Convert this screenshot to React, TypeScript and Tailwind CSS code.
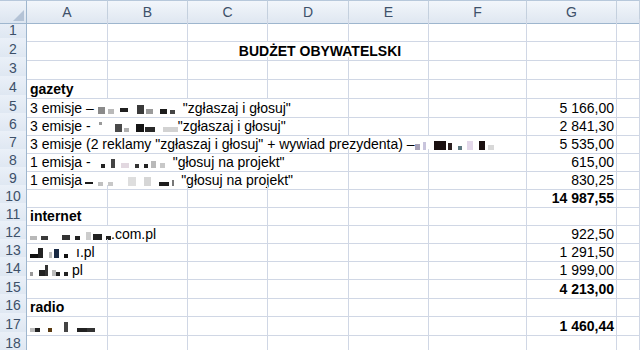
import React from "react";

type Blk = [number, number, string, number?, number?]; // marginLeft, width, color, height, offsetBottom

function Mosaic({ blocks }: { blocks: Blk[] }) {
  return (
    <span className="inline-flex items-end h-[12px] mb-[2px]">
      {blocks.map(([ml, w, c, h = 6, ob = 0], i) => (
        <span
          key={i}
          className="inline-block"
          style={{ marginLeft: ml, width: w, height: h, background: c, marginBottom: ob }}
        />
      ))}
    </span>
  );
}

const GRID = "grid grid-cols-[27px_81px_80px_80px_81px_80px_98px_90px_23px]";
const FONT = { fontFamily: '"Liberation Sans", Arial, sans-serif' };

function RH({ n }: { n: number }) {
  return (
    <div className="flex items-center justify-center bg-gradient-to-b from-[#eaf0f8] to-[#dde6f1] border-r border-b border-r-[#9eb6ce] border-b-[#c6d3e3] text-[14px] text-[#3d5069] pt-[1px]">
      {n}
    </div>
  );
}

function C({ span = "", right = false, bold = false, children, className = "" }: { span?: string; right?: boolean; bold?: boolean; children?: React.ReactNode; className?: string }) {
  return (
    <div
      className={`flex items-end whitespace-nowrap overflow-hidden px-[3px] pb-[1px] border-r border-b border-[#d0d7e5] text-[14px] leading-[16px] text-black ${span} ${right ? "justify-end pr-[2px]" : ""} ${bold ? "font-bold" : ""} ${className}`}
    >
      {children}
    </div>
  );
}

function Row({ n, h, children }: { n: number; h: string; children?: React.ReactNode }) {
  return (
    <div className={`${GRID} ${h}`}>
      <RH n={n} />
      {children}
    </div>
  );
}

function Empty({ count }: { count: number }) {
  return (
    <>
      {Array.from({ length: count }).map((_, i) => (
        <C key={i} />
      ))}
    </>
  );
}

export default function App() {
  const headers = ["A", "B", "C", "D", "E", "F", "G", ""];
  return (
    <div className="w-[640px] h-[350px] overflow-hidden bg-white" style={FONT}>
      {/* column header */}
      <div className={`${GRID} h-[19px]`}>
        <div className="relative bg-gradient-to-b from-[#eef3f9] to-[#dce5f0] border-r border-b border-r-[#9eb6ce] border-b-[#9eb6ce] border-t border-t-[#b7c8db]">
          <svg className="absolute right-[2px] bottom-[2px]" width="11" height="11" viewBox="0 0 11 11">
            <polygon points="11,0 11,11 0,11" fill="#b4c3d6" />
          </svg>
        </div>
        {headers.map((h, i) => (
          <div
            key={i}
            className="flex items-center justify-center bg-gradient-to-b from-[#f2f6fb] to-[#dfe7f1] border-r border-b border-t border-t-[#b7c8db] border-r-[#c4d0de] border-b-[#9eb6ce] text-[14px] text-[#3d5069] pt-[1px]"
          >
            {h}
          </div>
        ))}
      </div>

      <Row n={1} h="h-[19px]"><Empty count={8} /></Row>

      <Row n={2} h="h-[19px]">
        <C />
        <C />
        <C span="col-span-3 justify-center pl-[27px]" bold>
          BUDŻET OBYWATELSKI
        </C>
        <C />
        <C />
        <C />
      </Row>

      <Row n={3} h="h-[19px]"><Empty count={8} /></Row>

      <Row n={4} h="h-[19px]">
        <C bold>gazety</C>
        <Empty count={7} />
      </Row>

      <Row n={5} h="h-[18px]">
        <C span="col-span-4">
          3 emisje –
          <Mosaic
            blocks={[
              [4, 7, "#8a8a8a", 7],
              [3, 6, "#b9b9b9", 5],
              [6, 8, "#202020", 4, 2],
              [9, 7, "#3a3a3a", 9],
              [2, 7, "#9a9a9a", 5],
              [7, 7, "#1c1c1c", 5],
              [3, 5, "#444", 4],
            ]}
          />
          <span className="ml-[8px]">"zgłaszaj i głosuj"</span>
        </C>
        <Empty count={2} />
        <C right>5 166,00</C>
        <C />
      </Row>

      <Row n={6} h="h-[18px]">
        <C span="col-span-4">
          3 emisje -
          <Mosaic
            blocks={[
              [8, 3, "#9a9a9a", 3, 7],
              [13, 7, "#4a4a4a", 8],
              [2, 5, "#b0b0b0", 4],
              [7, 8, "#151515", 8],
              [1, 10, "#2a2a2a", 5],
              [8, 15, "#d2d2d2", 5],
            ]}
          />
          <span>"zgłaszaj i głosuj"</span>
        </C>
        <Empty count={2} />
        <C right>2 841,30</C>
        <C />
      </Row>

      <Row n={7} h="h-[18px]">
        <C span="col-span-6">
          3 emisje (2 reklamy "zgłaszaj i głosuj" + wywiad prezydenta) –
          <Mosaic
            blocks={[
              [0, 5, "#a7a2b8", 6],
              [3, 3, "#c8c4dc", 8],
              [8, 12, "#1a1010", 9],
              [2, 4, "#2c2020", 7],
              [6, 4, "#5d7880", 4],
              [5, 6, "#e3d8ea", 9],
              [6, 6, "#1a1010", 9],
              [3, 6, "#d8d8d8", 5],
            ]}
          />
        </C>
        <C right>5 535,00</C>
        <C />
      </Row>

      <Row n={8} h="h-[18px]">
        <C span="col-span-4">
          1 emisja -
          <Mosaic
            blocks={[
              [10, 4, "#222", 4],
              [6, 4, "#444", 9],
              [6, 8, "#e2d8e0", 5],
              [6, 4, "#333", 4],
              [5, 4, "#222", 4],
              [3, 5, "#b9b9b9", 7],
              [4, 5, "#c8c8c8", 5],
            ]}
          />
          <span className="ml-[8px]">"głosuj na projekt"</span>
        </C>
        <Empty count={2} />
        <C right>615,00</C>
        <C />
      </Row>

      <Row n={9} h="h-[18px]">
        <C span="col-span-4">
          1 emisja
          <Mosaic
            blocks={[
              [3, 8, "#1a1a1a", 2, 2],
              [5, 5, "#c0c0c0", 4],
              [5, 5, "#c8c8c8", 4],
              [15, 8, "#dedede", 9],
              [8, 7, "#d6d6d6", 9],
              [8, 10, "#1e1e1e", 4],
              [3, 2, "#777", 6],
            ]}
          />
          <span className="ml-[7px]">"głosuj na projekt"</span>
        </C>
        <Empty count={2} />
        <C right>830,25</C>
        <C />
      </Row>

      <Row n={10} h="h-[18px]">
        <Empty count={6} />
        <C right bold>14 987,55</C>
        <C />
      </Row>

      <Row n={11} h="h-[18px]">
        <C bold>internet</C>
        <Empty count={7} />
      </Row>

      <Row n={12} h="h-[18px]">
        <C span="col-span-2">
          <Mosaic
            blocks={[
              [0, 7, "#b8b8b8", 4],
              [4, 7, "#3a3a3a", 4],
              [14, 8, "#333", 5],
              [5, 5, "#222", 4],
              [6, 5, "#ccc", 8],
              [2, 9, "#222", 6],
              [4, 5, "#222", 4],
            ]}
          />
          <span>.com.pl</span>
        </C>
        <Empty count={4} />
        <C right>922,50</C>
        <C />
      </Row>

      <Row n={13} h="h-[18px]">
        <C>
          <Mosaic
            blocks={[
              [0, 8, "#111", 4],
              [0, 5, "#222", 10],
              [6, 3, "#bbb", 6],
              [2, 5, "#1a2a44", 9],
              [5, 4, "#111", 4],
            ]}
          />
          <span className="ml-[8px]">ı.pl</span>
        </C>
        <Empty count={5} />
        <C right>1 291,50</C>
        <C />
      </Row>

      <Row n={14} h="h-[19px]">
        <C>
          <Mosaic
            blocks={[
              [0, 3, "#999", 4],
              [6, 6, "#222", 6],
              [0, 3, "#333", 11],
              [4, 4, "#bbb", 6],
              [0, 4, "#222", 4],
              [4, 4, "#222", 4],
            ]}
          />
          <span className="ml-[4px]">pl</span>
        </C>
        <Empty count={5} />
        <C right>1 999,00</C>
        <C />
      </Row>

      <Row n={15} h="h-[18px]">
        <Empty count={6} />
        <C right bold>4 213,00</C>
        <C />
      </Row>

      <Row n={16} h="h-[19px]">
        <C bold>radio</C>
        <Empty count={7} />
      </Row>

      <Row n={17} h="h-[19px]">
        <C>
          <Mosaic
            blocks={[
              [0, 5, "#bbb", 4],
              [0, 5, "#222", 4],
              [8, 4, "#5a3a10", 4],
              [12, 4, "#444", 10],
              [9, 10, "#222", 4],
              [0, 8, "#333", 4],
            ]}
          />
        </C>
        <Empty count={5} />
        <C right bold>1 460,44</C>
        <C />
      </Row>

      <Row n={18} h="h-[18px]"><Empty count={8} /></Row>
    </div>
  );
}
